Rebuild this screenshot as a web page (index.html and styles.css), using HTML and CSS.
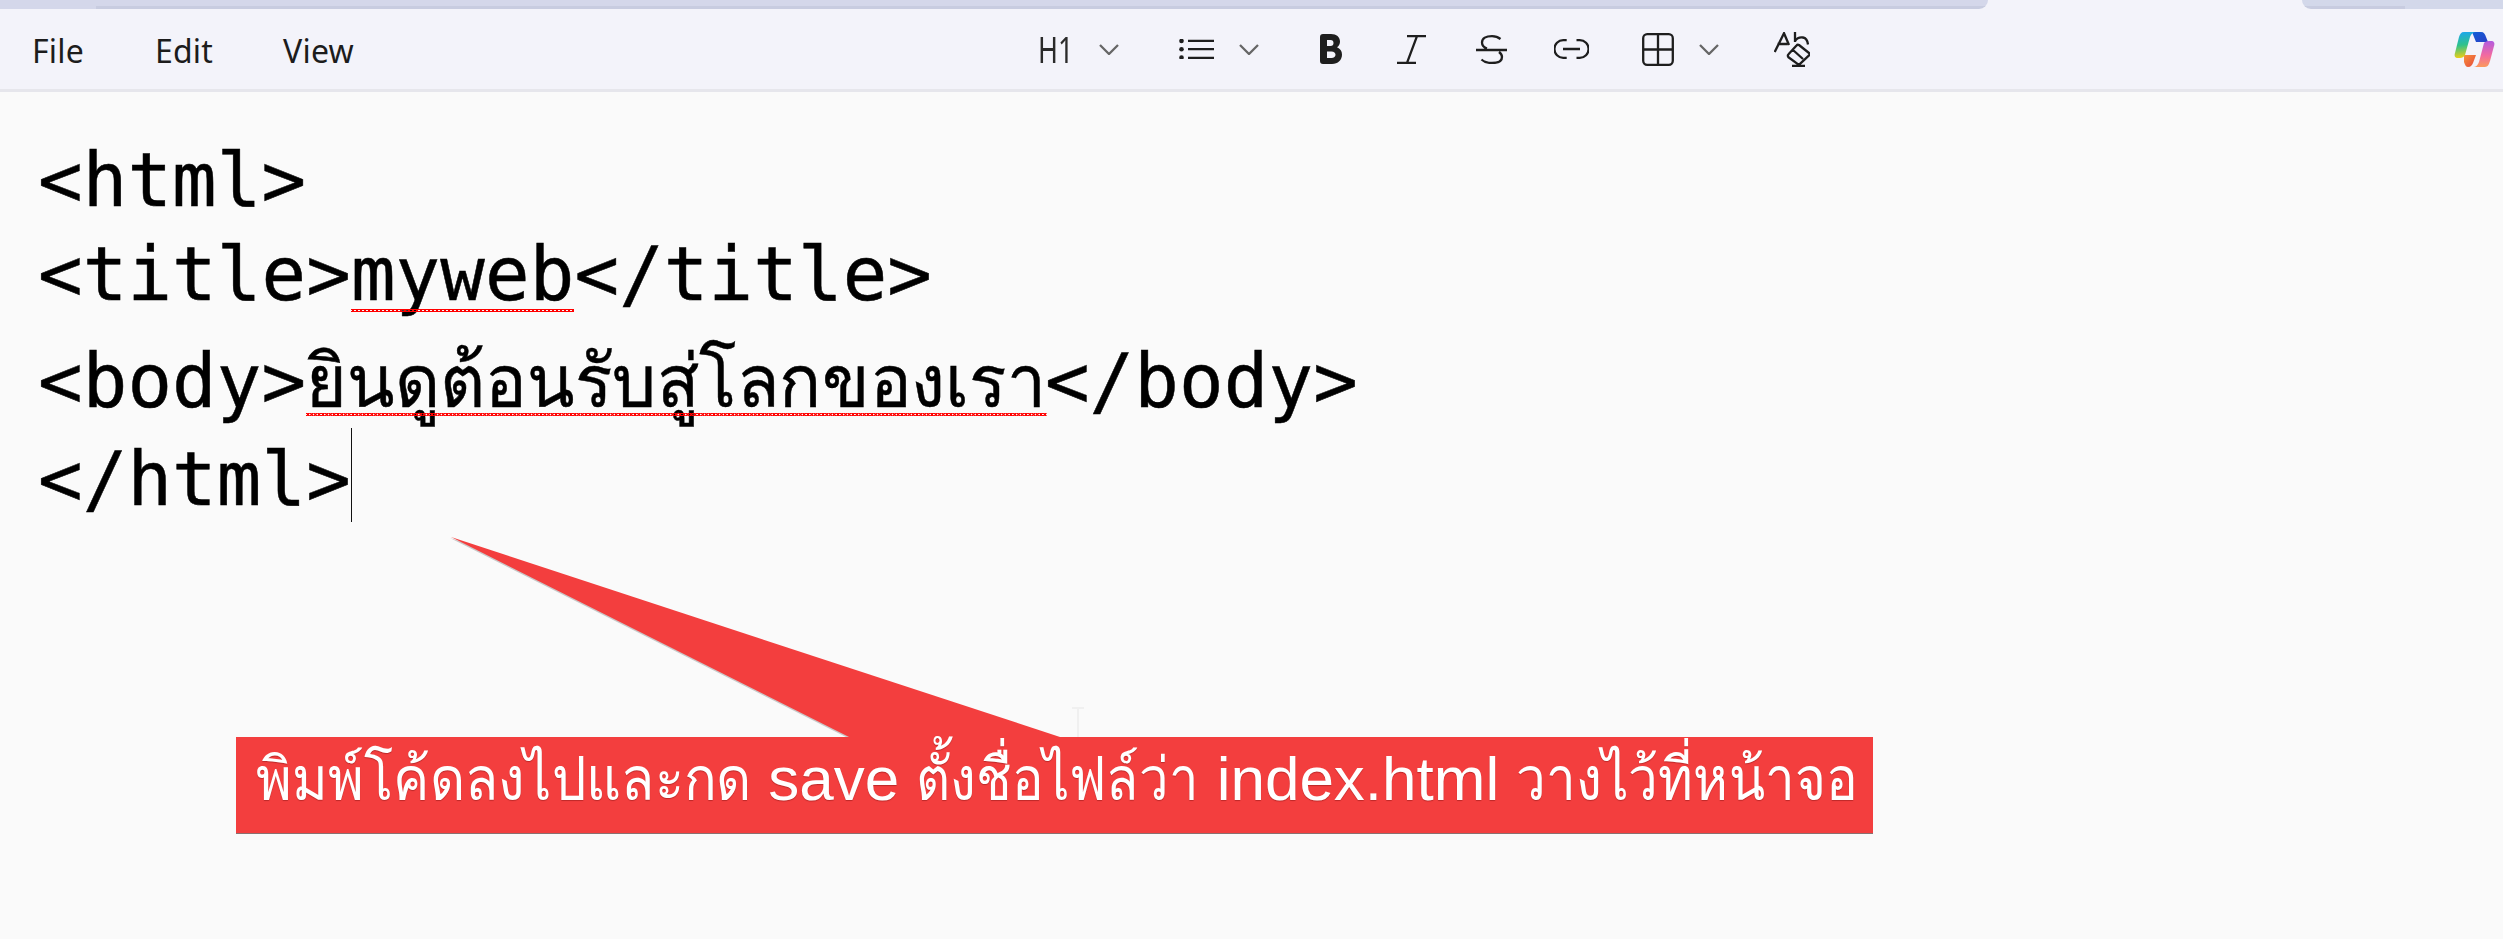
FILE: index.html
```html
<!DOCTYPE html>
<html lang="th">
<head>
<meta charset="utf-8">
<title>myweb</title>
<link rel="stylesheet" href="styles.css">
</head>
<body>
<div class="tabstrip">
  <div class="tab-left"></div>
  <div class="tab-active"></div>
  <div class="tab-right"></div>
</div>
<header class="toolbar">
  <nav class="menu">
    <span class="menu-item menu-file">File</span>
    <span class="menu-item menu-edit">Edit</span>
    <span class="menu-item">View</span>
  </nav>
  <div class="tools">
    <span class="h1-label">H1</span>
    <svg class="icon chev chev-h1" viewBox="0 0 20 11"><path d="M1 1l9 9 9-9"/></svg>
    <svg class="icon list" viewBox="0 0 35 20"><circle cx="2.500" cy="2" r="2.300" class="fill"/><circle cx="2.500" cy="10.200" r="2.300" class="fill"/><circle cx="2.500" cy="18.500" r="2.300" class="fill"/><path d="M9 1.800h26M9 10.200h26M9 18.800h26"/></svg>
    <svg class="icon chev chev-list" viewBox="0 0 20 11"><path d="M1 1l9 9 9-9"/></svg>
    <svg class="icon bold" viewBox="0 0 22 30"><path class="fill" fill-rule="evenodd" d="M0 3a3 3 0 0 1 3-3h8c5.500 0 9 3 9 7.500 0 2.500-1 4.500-3 5.800 3 1.200 5 3.700 5 7.200 0 5.500-4 9.500-10 9.500H3a3 3 0 0 1-3-3zM7 6v6h3.500c2 0 3-1.300 3-3s-1-3-3-3zM7 17.500V24h4.500c2.500 0 4-1.300 4-3.200s-1.500-3.300-4-3.300z"/></svg>
    <svg class="icon ital" viewBox="0 0 29 29"><path d="M10 1.200h19M0 27.800h19M20 1.200L10 27.800"/></svg>
    <svg class="icon strike" viewBox="0 0 31 29"><path d="M0 15h31M24.500 4C22 2 19 1.200 16 1.200 10 1.200 6 3.500 6 7.500c0 3 2 5 5 6M23 17c2 1.500 3 3 3 5 0 4-4 6-10 6-4.500 0-8-1-10.500-3.500"/></svg>
    <svg class="icon link" viewBox="0 0 35 20"><path d="M12.700 1.200H9.200a8.800 8.800 0 0 0 0 17.600h3.500M22.500 1.200h3.300a8.800 8.800 0 0 1 0 17.600h-3.300M9 10h17"/></svg>
    <svg class="icon table" viewBox="0 0 32 33"><rect x="1.200" y="1.200" width="29.600" height="30.600" rx="4"/><path d="M16 1.200v30.600M1.200 16.500h29.600"/></svg>
    <svg class="icon chev chev-table" viewBox="0 0 20 11"><path d="M1 1l9 9 9-9"/></svg>
    <svg class="icon clear" viewBox="0 0 36 35"><path d="M0.700 20L10 1.200 15 13M3.500 12h10M21 0v10M21 9c2-3 5-4 8-3.500 3 .5 4.500 3 5 7"/><path d="M25 13l10 8a1.500 1.500 0 0 1 0 2.300l-9 8.500a2 2 0 0 1-2.500 0l-9-6.500a2 2 0 0 1 0-3l8-8.800a2 2 0 0 1 2.500-.5zM19 18l10 9M18 33.800h13"/></svg>
  </div>
  <svg class="copilot" viewBox="0 0 41 36">
    <defs>
      <linearGradient id="cg1" x1="0.300" y1="0" x2="0.400" y2="1"><stop offset="0" stop-color="#1ba7ee"/><stop offset=".5" stop-color="#2fc28b"/><stop offset="1" stop-color="#f2cf12"/></linearGradient>
      <linearGradient id="cg2" x1="0.500" y1="0" x2="0.500" y2="1"><stop offset="0" stop-color="#b25be0"/><stop offset=".55" stop-color="#f26aa0"/><stop offset="1" stop-color="#fb9a5c"/></linearGradient>
      <linearGradient id="cg3" x1="0" y1="0" x2="1" y2="1"><stop offset="0" stop-color="#0f5fd8"/><stop offset="1" stop-color="#2a3fc4"/></linearGradient>
      <linearGradient id="cg4" x1="0" y1="0" x2="1" y2="1"><stop offset="0" stop-color="#f8903c"/><stop offset="1" stop-color="#e4473c"/></linearGradient>
    </defs>
    <path fill="url(#cg3)" d="M18 1h9c3 0 4 2 5 5l2 5H22z"/>
    <path fill="url(#cg4)" d="M10 24h12l-3 8c-1 2-2 4-5 4-2 0-3-2-4-5z"/>
    <path fill="url(#cg1)" d="M10 1h12c-3 0-5 2-6 5l-5 18c-1 2-3 3-5 3H4c-3 0-4-2-3-5L5 6c1-3 2-5 5-5z"/>
    <path fill="url(#cg2)" d="M31 36H19c3 0 5-2 6-5l5-19c1-1 2-2 5-2h2c3 0 4 2 3 5l-4 15c-1 3-2 6-5 6z"/>
  </svg>
</header>
<main class="editor">
  <div class="doc">
    <p class="line">&lt;html&gt;</p>
    <p class="line">&lt;title&gt;<span class="misspelt">myweb</span>&lt;/title&gt;</p>
    <p class="line line-thai">&lt;body&gt;<span class="misspelt thai-run">ยินดูต้อนรับสู่โลกของเรา</span>&lt;/body&gt;</p>
    <p class="line">&lt;/html&gt;<span class="caret"></span></p>
  </div>
  <svg class="pointer" viewBox="0 0 2503 939"><polygon points="451,537 849,737 1060,737"/></svg>
  <span class="ibeam"></span>
  <div class="callout"><span class="th th-a">พิมพ์โค้ดลงไปและกด</span> save <span class="th th-b">ตั้งชื่อไฟล์ว่า</span> index.html <span class="th th-c">วางไว้ที่หน้าจอ</span></div>
</main>
</body>
</html>
```
FILE: styles.css
```css
* { box-sizing: border-box; }
html, body { margin: 0; height: 100%; overflow: hidden; }
body { background: #fafafa; display: flex; flex-direction: column; height: 939px; font-family: "Noto Sans", sans-serif; }
.tabstrip { height: 9px; display: flex; background: #f3f3fa; flex: none; }
.tab-left { width: 1988px; border-bottom-right-radius: 9px; background: linear-gradient(#c8cce0, #c8cce0) 96px 100% / 100% 3px no-repeat, #d4d7ea; }
.tab-active { width: 314px; }
.tab-right { flex: 1; border-bottom-left-radius: 9px; background: linear-gradient(#c8cce0, #c8cce0) 0 100% / 103px 3px no-repeat, #d3d8ea; }
.toolbar { height: 83px; flex: none; background: #f3f3fa; border-bottom: 3px solid #e6e6ec; display: flex; align-items: center; position: relative; padding-left: 32px; }
.menu { display: flex; flex: none; width: 1006px; padding-top: 4px; color: #1c1c1c; font-size: 32px; letter-spacing: .2px; }
.menu-item { line-height: 44px; }
.menu-file { margin-right: 71px; }
.menu-edit { margin-right: 70px; }
.tools { display: flex; align-items: center; }
.h1-label { display: block; flex: none; width: 36px; font-size: 27px; line-height: 30px; font-weight: 400; color: #2a2a2a; transform: scaleY(1.35); margin-right: 25px; }
.icon { display: block; fill: none; stroke: #1e1e1e; stroke-width: 2.300; flex: none; }
.icon .fill { fill: #1e1e1e; stroke: none; }
.chev { width: 20px; height: 11px; stroke: #666; }
.chev-h1 { margin-right: 60px; }
.list { width: 35px; height: 20px; margin-right: 25px; }
.chev-list { margin-right: 61px; }
.bold { width: 22px; height: 30px; margin-right: 55px; }
.ital { width: 29px; height: 29px; margin-right: 50px; }
.strike { width: 31px; height: 29px; margin-right: 47px; }
.link { width: 35px; height: 20px; margin-right: 53px; }
.table { width: 32px; height: 33px; margin-right: 25px; }
.chev-table { margin-right: 55px; }
.clear { width: 36px; height: 35px; }
.copilot { position: absolute; right: 8px; top: 22px; width: 41px; height: 36px; filter: blur(.4px); }
.editor { flex: 1; position: relative; background: #fafafa; }
.doc { padding: 41px 0 0 38px; }
.line { margin: 0; font: 74px/94px "DejaVu Sans Mono", monospace; letter-spacing: .15px; -webkit-text-stroke: .5px #000; color: #000; white-space: pre; height: 94px; }
.line-thai { height: 107px; padding-top: 13px; }
.misspelt { display: inline-block; position: relative; }
.misspelt::after { content: ""; position: absolute; left: 0; right: 0; top: 82px; height: 3px; background-image: linear-gradient(45deg, transparent 40%, #f00 40%, #f00 60%, transparent 60%), linear-gradient(-45deg, transparent 40%, #f00 40%, #f00 60%, transparent 60%); background-size: 4px 3px; }
.thai-run { transform: scaleX(.94); transform-origin: 0 50%; margin-right: -49px; }
.thai-run::after { top: 79px; }
.caret { display: inline-block; width: 1px; height: 94px; background: #111; vertical-align: -17px; }
.pointer { position: absolute; left: 0; top: -92px; width: 2503px; height: 939px; fill: #f33e3e; pointer-events: none; filter: drop-shadow(-1px 1px 0 rgba(0,0,0,.2)); }
.ibeam { position: absolute; left: 1077px; top: 615px; width: 2px; height: 30px; background: #f0f0f0; }
.ibeam::before { content: ""; position: absolute; left: -5px; top: 0; width: 12px; height: 2px; background: #f0f0f0; }
.callout { position: absolute; left: 236px; top: 645px; width: 1637px; height: 97px; background: #f33e3e; border-bottom: 1px solid #8a7070; color: #fff; font: 62px/84px "Liberation Sans", sans-serif; padding-left: 20px; white-space: nowrap; text-shadow: 0 1px 1px rgba(90,0,0,.35); }
.th { display: inline-block; font-size: 60px; transform-origin: 0 50%; }
.th-a { transform: scaleX(.904); margin-right: -53px; }
.th-b { transform: scaleX(.877); margin-right: -39px; }
.th-c { transform: scaleX(.883); margin-right: -45px; }
```
